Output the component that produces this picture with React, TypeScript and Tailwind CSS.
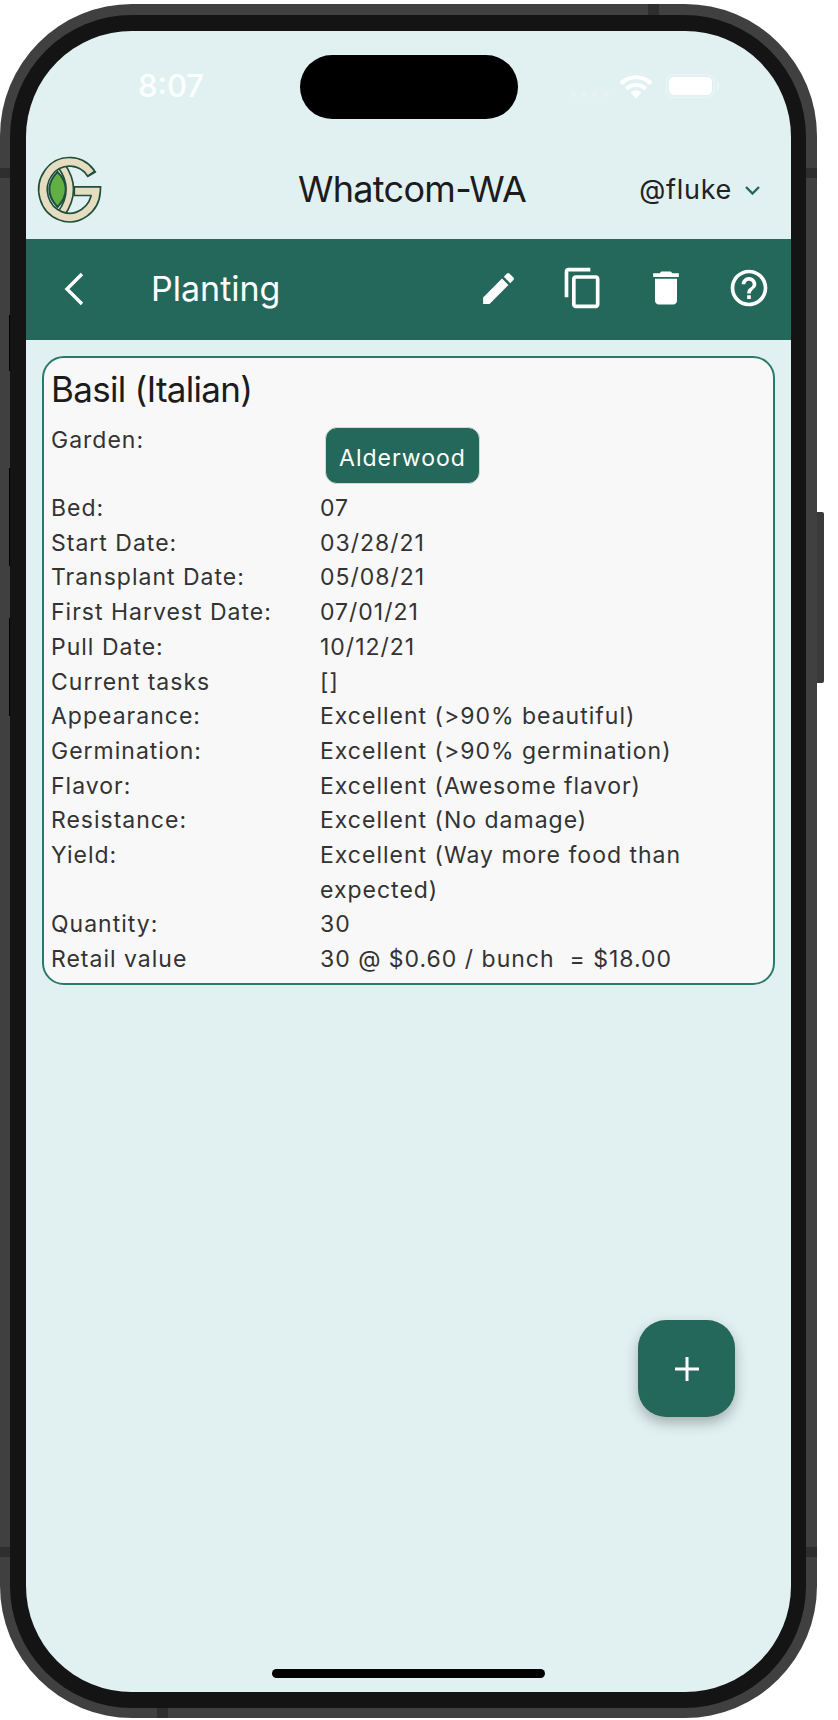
import { MdEdit, MdOutlineContentCopy, MdDelete, MdHelpOutline } from 'react-icons/md'

const rows = [
  ['Bed:', '07'],
  ['Start Date:', '03/28/21'],
  ['Transplant Date:', '05/08/21'],
  ['First Harvest Date:', '07/01/21'],
  ['Pull Date:', '10/12/21'],
  ['Current tasks', '[]'],
  ['Appearance:', 'Excellent (>90% beautiful)'],
  ['Germination:', 'Excellent (>90% germination)'],
  ['Flavor:', 'Excellent (Awesome flavor)'],
  ['Resistance:', 'Excellent (No damage)'],
  ['Yield:', 'Excellent (Way more food than expected)'],
  ['Quantity:', '30'],
  ['Retail value', '30 @ $0.60 / bunch\u00a0\u00a0= $18.00'],
]

function Logo() {
  return (
    <svg className="shrink-0 overflow-visible" width="63" height="67" viewBox="38 30 190 202" fill="none">
      <path d="M97 78 Q47 130 97 184 Q147 130 97 78Z" fill="#62b044" stroke="#1f4f3c" strokeWidth="6" />
      <path d="M108 58 Q160 130 108 204" stroke="#1f4f3c" strokeWidth="27" />
      <path d="M108 58 Q160 130 108 204" stroke="#e6dcc0" strokeWidth="17" />
      <path d="M201 87 A80 84 0 1 0 213 136 L146 136" stroke="#1f4f3c" strokeWidth="31" strokeLinejoin="miter" />
      <path d="M197 81 A80 84 0 1 0 213 136 L150 136" stroke="#e6dcc0" strokeWidth="21" strokeLinejoin="miter" />
    </svg>
  )
}

export default function App() {
  return (
    <div className="relative w-[838px] h-[1720px] overflow-hidden bg-white pt-[4px] font-['Inter',sans-serif]">
      {/* side button */}
      <div className="absolute left-[816px] top-[512px] w-[8px] h-[171px] bg-[#3a3a3a] rounded-r-[2px]"></div>

      <div className="relative w-[817px] h-[1714px] rounded-[132px] bg-[#404040] pt-[11px] pb-[10px] pl-[10px] pr-[11px]">
        {/* inner button shadows */}
        <div className="absolute left-[9px] top-[311px] w-[6px] h-[56px] bg-black"></div>
        <div className="absolute left-[9px] top-[464px] w-[6px] h-[98px] bg-black"></div>
        <div className="absolute left-[9px] top-[614px] w-[6px] h-[98px] bg-black"></div>
        <div className="absolute left-[800px] top-[508px] w-[6px] h-[171px] bg-black"></div>

        {/* antenna bands */}
        <div className="absolute left-0 top-[164px] w-[10px] h-[10px] bg-[#2e2e2e]"></div>
        <div className="absolute right-0 top-[164px] w-[11px] h-[10px] bg-[#2e2e2e]"></div>
        <div className="absolute left-0 top-[1543px] w-[10px] h-[10px] bg-[#2e2e2e]"></div>
        <div className="absolute right-0 top-[1543px] w-[11px] h-[10px] bg-[#2e2e2e]"></div>
        <div className="absolute left-[648px] top-0 w-[11px] h-[11px] bg-[#2e2e2e]"></div>
        <div className="absolute left-[157px] bottom-0 w-[11px] h-[10px] bg-[#2e2e2e]"></div>

        <div className="relative h-full rounded-[122px] bg-[#141414] pt-[16px] pb-[16px] pl-[16px] pr-[15px]">
          <div className="relative h-full rounded-[106px] overflow-hidden bg-[#e1f1f1] flex flex-col">
            {/* status bar */}
            <div className="h-[119px] shrink-0 flex items-start pt-[24px] pl-[112px]">
              <span className="w-[162px] shrink-0 mt-[11px] text-[31px] leading-[40px] font-medium text-white/90">8:07</span>
              <div className="w-[218px] h-[64px] shrink-0 rounded-full bg-black"></div>
              <div className="ml-[52px] mt-[36px] flex gap-[5px] shrink-0">
                <span className="w-[6px] h-[6px] rounded-full bg-white/20"></span>
                <span className="w-[6px] h-[6px] rounded-full bg-white/20"></span>
                <span className="w-[6px] h-[6px] rounded-full bg-white/20"></span>
                <span className="w-[6px] h-[6px] rounded-full bg-white/20"></span>
              </div>
              <svg className="ml-[10px] mt-[20px] shrink-0" width="34" height="24" viewBox="0 0 34 24" fill="none">
                <path d="M2 8.5 A21 21 0 0 1 32 8.5" stroke="white" strokeWidth="4" />
                <path d="M7.5 14 A13.5 13.5 0 0 1 26.5 14" stroke="white" strokeWidth="4" />
                <path d="M11.5 17.5 L17 23.5 L22.5 17.5 A8 8 0 0 0 11.5 17.5Z" fill="white" />
              </svg>
              <div className="ml-[13px] mt-[19px] flex items-center shrink-0">
                <div className="w-[49px] h-[24px] rounded-[8px] border-[1.5px] border-white/40 p-[2px]">
                  <div className="h-full rounded-[5px] bg-white"></div>
                </div>
                <div className="ml-[2px] w-[2px] h-[8px] rounded-r bg-white/40"></div>
              </div>
            </div>

            {/* app header */}
            <div className="h-[89px] shrink-0 flex items-center pl-[12px] pr-[31px] pb-[11px]">
              <Logo />
              <span className="ml-[197px] text-[36px] tracking-[-0.7px] text-[#1c1c1c] leading-[44px]">Whatcom-WA</span>
              <div className="ml-auto flex items-center mt-[1px]">
                <span className="text-[27px] leading-[36px] tracking-[0.7px] text-[#222]">@fluke</span>
                <svg className="ml-[13px] mt-[2px]" width="15" height="9" viewBox="0 0 15 9" fill="none">
                  <path d="M1 1 L7.5 7.5 L14 1" stroke="#24685c" strokeWidth="2.4" />
                </svg>
              </div>
            </div>

            {/* toolbar */}
            <div className="h-[101px] shrink-0 bg-[#24685c] flex items-center text-white">
              <svg className="ml-[37px] mt-[-2px]" width="22" height="34" viewBox="0 0 22 34" fill="none">
                <path d="M19 2 L4 17 L19 32" stroke="white" strokeWidth="3.4" />
              </svg>
              <span className="ml-[66px] mt-[-2px] text-[34px] leading-[44px]">Planting</span>
              <div className="ml-auto flex items-center pr-[20px] mt-[-3px]">
                <MdEdit size={41} />
                <MdOutlineContentCopy size={44} className="ml-[42px]" />
                <MdDelete size={44} className="ml-[39px]" />
                <MdHelpOutline size={44} className="ml-[39px]" />
              </div>
            </div>

            {/* planting card */}
            <div className="mt-[16px] mx-[16px] h-[629px] rounded-[22px] border-2 border-[#2a7a6c] bg-[#f8f8f8] pl-[7px] pr-[7px] pt-[6px]">
              <h1 className="text-[35px] tracking-[-0.7px] leading-[50px] text-[#1c1c1c]">Basil (Italian)</h1>
              <div className="grid grid-cols-[269px_1fr] text-[23px] leading-[34.7px] tracking-[1px] text-[#333]">
                <div className="mt-[9px]">Garden:</div>
                <div className="h-[77px] pl-[5px] pt-[13px]">
                  <div className="w-[155px] h-[57px] rounded-[12px] border border-[#d4d8d8] bg-[#24685c] text-white flex items-center justify-center pt-[5px]">Alderwood</div>
                </div>
                {rows.map((r) => (
                  <div key={r[0]} className="contents">
                    <div>{r[0]}</div>
                    <div className="pr-[60px]">{r[1]}</div>
                  </div>
                ))}
              </div>
            </div>

            {/* add button */}
            <div className="absolute left-[612px] top-[1289px] w-[97px] h-[97px] rounded-[28px] bg-[#24685c] shadow-[0_6px_14px_rgba(0,0,0,0.28)] flex items-center justify-center">
              <svg width="24" height="24" viewBox="0 0 24 24" fill="none">
                <path d="M12 0 V24 M0 12 H24" stroke="white" strokeWidth="3" />
              </svg>
            </div>

            {/* home indicator */}
            <div className="absolute left-[246px] top-[1638px] w-[273px] h-[9px] rounded-full bg-black"></div>
          </div>
        </div>
      </div>
    </div>
  )
}
